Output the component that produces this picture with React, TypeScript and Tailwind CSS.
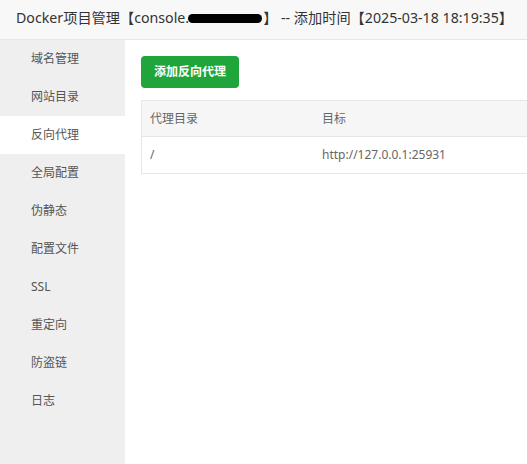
import React from "react";

const items = ["域名管理", "网站目录", "反向代理", "全局配置", "伪静态", "配置文件", "SSL", "重定向", "防盗链", "日志"];

export default function App() {
  return (
    <div
      className="w-[527px] h-[464px] overflow-hidden bg-white flex flex-col"
      style={{ fontFamily: '"Noto Sans", "Noto Sans CJK SC", sans-serif' }}
    >
      <div className="h-[40px] shrink-0 bg-[#f8f8f8] border-b border-[#e6e6e6] flex items-center pl-[16px] pb-[3px] text-[14.2px] text-[#333] whitespace-nowrap">
        <span>Docker项目管理【console.</span>
        <span className="inline-block w-[74px] h-[9px] bg-black rounded-full -ml-[1px] mr-[1px] mt-[1px]" />
        <span>】 -- 添加时间【2025-03-18 18:19:35】</span>
      </div>
      <div className="flex flex-1 min-h-0">
        <div className="w-[125px] shrink-0 bg-[#efefef] flex flex-col">
          {items.map((t) => (
            <div
              key={t}
              className={`h-[38px] flex items-center pl-[31px] text-[12px] text-[#555] ${t === "反向代理" ? "bg-white" : ""}`}
            >
              {t}
            </div>
          ))}
        </div>
        <div className="flex-1 pl-[16px] pt-[16px] overflow-hidden">
          <button className="w-[98px] h-[32px] rounded-[4px] bg-[#20a53a] text-white text-[12px] font-bold flex items-center justify-center">
            添加反向代理
          </button>
          <div className="mt-[12px] w-[500px] border border-[#e6e6e6] text-[12px] text-[#666]">
            <div className="h-[36px] bg-[#f6f6f6] border-b border-[#e6e6e6] flex items-center">
              <div className="w-[172px] pl-[8px]">代理目录</div>
              <div className="pl-[8px]">目标</div>
            </div>
            <div className="h-[36px] flex items-center">
              <div className="w-[172px] pl-[8px]">/</div>
              <div className="pl-[8px]">http://127.0.0.1:25931</div>
            </div>
          </div>
        </div>
      </div>
    </div>
  );
}
